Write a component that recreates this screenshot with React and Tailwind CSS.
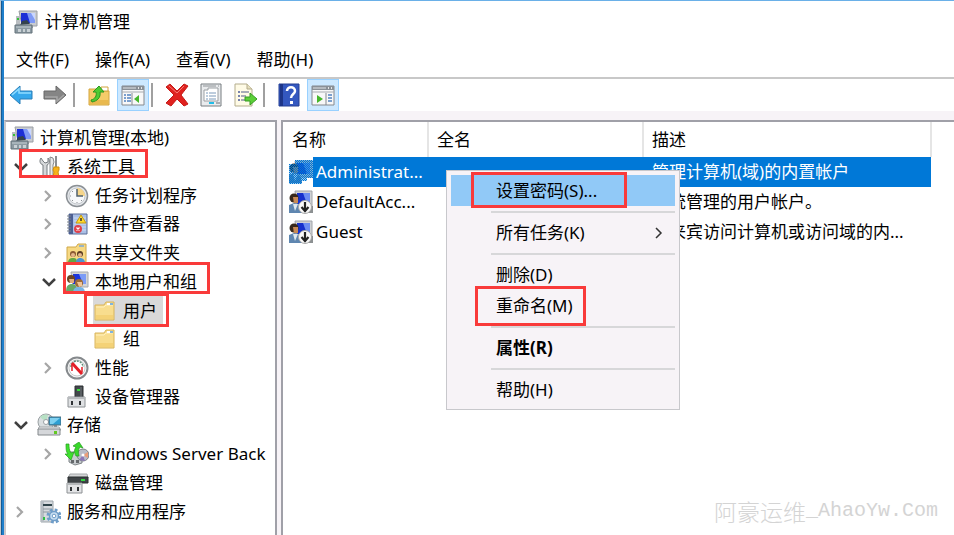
import { clsx } from 'clsx';

/* ---------- icons ---------- */

const Svg = ({ className = 'w-6 h-6', box = '0 0 24 24', children }) => (
  <svg viewBox={box} className={clsx('shrink-0', className)} fill="none" aria-hidden="true">
    {children}
  </svg>
);

const ComputerIcon = ({ className }) => (
  <Svg className={className}>
    <path d="M5 1h18v15H8z" fill="#c9ccd0" stroke="#9a9ea4" />
    <path d="M7 3h14v10H7z" fill="#1c2fd6" />
    <path d="M13 3h8v10h-5z" fill="#7f9af5" />
    <path d="M17 3h4v7z" fill="#c9d6ff" />
    <path d="M13 16h6v2h-6z" fill="#a5a9ad" />
    <path d="M2 6h4v9H2z" fill="#b9bdc1" />
    <path d="M3 8h2v2H3z" fill="#35c235" />
    <path d="M6 15l2-4 5-1 3 4z" fill="#33424c" />
    <path d="M1 15h17v8H1z" fill="#8c9aa2" stroke="#65737b" />
    <path d="M2 17h15" stroke="#c3cdd2" />
    <path d="M4 19h3v3H4zM9 19h2v3H9zM13 19h3v3h-3z" fill="#c9d1d5" />
  </Svg>
);

const ToolsIcon = () => (
  <Svg>
    <path d="M4 3c-2 3-1 6 2 7v12h4V10c3-1 3-5 1-7v4L8 8 6 6z" fill="#d5d7d9" stroke="#777c80" />
    <path d="M13 2l3 1 1 4-1 3v12h-3z" fill="#e5e7e8" stroke="#85898c" />
    <path d="M19 1v12" stroke="#8c8f92" strokeWidth="2" />
    <path d="M17 12h5v3l-1 2 1 5h-6l1-5-1-2z" fill="#f6b21b" stroke="#d18f0b" />
  </Svg>
);

const ClockIcon = () => (
  <Svg>
    <circle cx="12" cy="12" r="10.5" fill="#e3e6ea" stroke="#8b9095" strokeWidth="1.5" />
    <circle cx="12" cy="12" r="8" fill="#f7f8fa" stroke="#c4c8cc" />
    <path d="M12 4a8 8 0 0 1 8 8h-8z" fill="#f6d58a" />
    <path d="M12 5v7h6" stroke="#52616f" strokeWidth="1.5" />
    <path d="M5 12h1M12 18v1M7 7l1 1M7 17l1-1M17 17l-1-1" stroke="#8b9095" />
  </Svg>
);

const EventIcon = () => (
  <Svg>
    <path d="M4 2h18v20H4z" fill="#a9bfe6" stroke="#5c6f99" />
    <path d="M4 2h4v20H4z" fill="#4c5f92" />
    <path d="M9 6h12M9 9h12M9 12h12M9 15h12M9 18h12" stroke="#ccdaf2" />
    <path d="M2 4h4M2 7h4M2 10h4M2 13h4M2 16h4M2 19h4" stroke="#7d838b" />
    <path d="M16 3l5 8H11z" fill="#ffd92e" stroke="#c79a10" />
    <path d="M16 6v3" stroke="#333" strokeWidth="1.5" />
    <circle cx="13" cy="17" r="4" fill="#e0404a" />
    <path d="M11.500 15.500l3 3M14.500 15.500l-3 3" stroke="#fff" strokeWidth="1.200" />
  </Svg>
);

const SharedIcon = () => (
  <Svg>
    <path d="M2 6h9l2-3h8v18H2z" fill="#f7d983" stroke="#d0a848" />
    <path d="M14 5h5" stroke="#7aa7d8" strokeWidth="1.500" />
    <circle cx="8" cy="13" r="3" fill="#8a5a33" />
    <circle cx="15" cy="13" r="3" fill="#5a3d24" />
    <circle cx="8" cy="14" r="2" fill="#e5b78c" />
    <circle cx="15" cy="14" r="2" fill="#e5b78c" />
    <path d="M3 22c0-4 2-5 5-5s4 1 4 5z" fill="#62a844" />
    <path d="M11 22c0-4 2-5 4-5s5 1 5 5z" fill="#4d94ce" />
  </Svg>
);

const UsersIcon = () => (
  <Svg>
    <path d="M6 2h17v15H8z" fill="#d3d5d8" stroke="#a5a8ac" />
    <path d="M8 4h13v10H8z" fill="#1c35dc" />
    <path d="M14 4h7v10h-3z" fill="#7c9cf6" />
    <circle cx="6" cy="9" r="4" fill="#6b4423" />
    <path d="M4 9h5v4H5z" fill="#e0ab7c" />
    <path d="M1 22c0-6 2-8 6-8s5 3 5 8z" fill="#68a868" />
    <circle cx="14" cy="13" r="4" fill="#9c6b36" />
    <path d="M12 12h5v4l-3 1z" fill="#efc396" />
    <path d="M8 23c0-4 2-6 6-6s6 2 6 6z" fill="#78b4e4" />
  </Svg>
);

const FolderIcon = () => (
  <Svg>
    <path d="M2 6h9l2-3h8v18H2z" fill="#f8dd8e" stroke="#d8b45c" />
    <path d="M3 8h8l2-2h7" stroke="#fff0bd" />
    <path d="M14 4h6v2h-6z" fill="#fff" />
    <path d="M17 5h3" stroke="#539bd4" strokeWidth="1.500" />
    <path d="M3 16h17v4H3z" fill="#efc75f" opacity=".5" />
  </Svg>
);

const GaugeIcon = () => (
  <Svg>
    <circle cx="12" cy="12" r="10.500" fill="#f7f7f7" stroke="#85898c" strokeWidth="2" />
    <circle cx="12" cy="12" r="8" fill="#fff" stroke="#c7caca" />
    <path d="M6 11a6 6 0 0 1 12 0" stroke="#5e8d77" strokeWidth="1.500" strokeDasharray="2 1" />
    <path d="M7 7l10 11" stroke="#e31f26" strokeWidth="3" />
    <path d="M7 15V8M17 16v-5" stroke="#e31f26" strokeWidth="1.500" />
  </Svg>
);

const DeviceIcon = () => (
  <Svg>
    <path d="M10 1h8v13h-8z" fill="#42474b" stroke="#2d3033" />
    <path d="M12 4h3v2h-3z" fill="#37dc3c" />
    <path d="M16 2v11" stroke="#70767a" />
    <path d="M3 12h17v10H3z" fill="#dfe1e3" stroke="#8d9194" />
    <path d="M3 12h17v2H3z" fill="#b8bbbe" />
    <path d="M6 16h2v4H6zM14 16h2v4h-2z" fill="#303336" />
  </Svg>
);

const StorageIcon = () => (
  <Svg>
    <circle cx="9" cy="9" r="8" fill="#d9dee0" stroke="#9aa0a3" />
    <path d="M9 9L3 4c3-3 6-3 8-2z" fill="#b7e1c4" />
    <circle cx="9" cy="9" r="2.500" fill="#fff" stroke="#9aa0a3" />
    <path d="M12 4h12v8H12z" fill="#2e9fd3" stroke="#4c6c7c" />
    <path d="M13 5h10l-7 6h-3z" fill="#7fd0f0" />
    <path d="M17 12h3v3h-3z" fill="#7a8388" />
    <path d="M2 14h20l2 3H1z" fill="#eceeef" stroke="#a2a6a9" />
    <path d="M1 16h22v6H1z" fill="#d5d7da" stroke="#84898c" />
    <path d="M17 18h3v3h-3z" fill="#62c922" />
  </Svg>
);

const BackupIcon = () => (
  <Svg>
    <path d="M4 10h13v11l-7 2-6-3z" fill="#c8cccf" stroke="#7d8386" />
    <circle cx="18" cy="13" r="6" fill="#b9bcc7" stroke="#7c8088" />
    <path d="M18 13l5-3v6z" fill="#eb9d77" />
    <path d="M18 13l-4 5 6 1z" fill="#8c78b8" />
    <circle cx="18" cy="13" r="1.500" fill="#fff" />
    <path d="M1 2c0 5 0 8 2 10H0l6 6 3-8-3 1C4 8 4 5 4 2z" fill="#3fe12e" stroke="#279c20" strokeWidth=".7" />
    <path d="M11 14c-2-4-2-6 0-9l-3-1 6-4 4 6-3-1c-2 3-2 5-1 9z" fill="#38d82a" stroke="#279c20" strokeWidth=".7" />
    <path d="M6 18h3v3H6zM11 18h3v3h-3z" fill="#65696c" />
  </Svg>
);

const DiskIcon = () => (
  <Svg>
    <path d="M5 3h17l1 4H3z" fill="#d5d7d8" stroke="#a5a8aa" />
    <path d="M3 6h20v6H3z" fill="#3f4447" stroke="#2b2f31" />
    <path d="M16 8h4v2h-4z" fill="#32d741" />
    <path d="M2 12h15v10H2z" fill="#e3e4e6" stroke="#8d9194" />
    <path d="M2 12h15v2H2z" fill="#b5b8ba" />
    <path d="M5 16h2v4H5zM12 16h2v4h-2z" fill="#303336" />
  </Svg>
);

const ServicesIcon = () => (
  <Svg>
    <path d="M4 1h12v21H4z" fill="#d6dade" stroke="#9ba3a9" />
    <path d="M4 1h3v21H4z" fill="#b6bdc3" />
    <path d="M6 5h9" stroke="#30444b" strokeWidth="2" />
    <path d="M6 9h9M6 12h7" stroke="#8c979e" />
    <path d="M6 17h2v3H6z" fill="#2fbf44" />
    <circle cx="17" cy="16" r="6" stroke="#6f9dc8" strokeWidth="3" strokeDasharray="2.700 2" />
    <circle cx="17" cy="16" r="4.500" fill="#c8dff2" stroke="#6f9dc8" strokeWidth="1.500" />
    <circle cx="17" cy="16" r="1.800" fill="#fff" stroke="#6f9dc8" />
  </Svg>
);

const AccountIcon = ({ disabled, selected }) => (
  <Svg>
    <path d="M6 1h17v16H8z" fill="#cfd1d4" stroke="#a1a4a8" />
    <path d="M8 3h13v11H8z" fill="#1530cc" />
    <path d="M14 3h7v11h-3z" fill="#6b8df2" />
    <circle cx="5" cy="8" r="4.500" fill="#38281c" />
    <path d="M4 7h5v6l-4 1z" fill="#c78a56" />
    <path d="M0 23V15l5-2c5 0 7 3 8 10z" fill="#5f86b0" />
    <path d="M4 14l2 7 3-7z" fill="#dfe8ef" />
    {disabled && (
      <>
        <path d="M13 16h11v7H13z" fill="#8c9092" />
        <circle cx="16" cy="17" r="6.500" fill="#fafafa" stroke="#a8a8a8" />
        <path d="M16 12v8M12.500 17l3.500 4 3.500-4" stroke="#222" strokeWidth="2.200" />
      </>
    )}
    {selected && (
      <>
        <pattern id="dither" width="2" height="2" patternUnits="userSpaceOnUse">
          <path d="M0 0h1v1H0zM1 1h1v1H1z" fill="#0078d7" />
        </pattern>
        <path d="M6 0h18v18h-6v3h-5v3H0V4h6z" fill="#0078d7" opacity=".35" />
        <path d="M6 0h18v18h-6v3h-5v3H0V4h6z" fill="url(#dither)" />
      </>
    )}
  </Svg>
);

const ArrowIcon = ({ forward }) => (
  <Svg className={clsx('w-6 h-6', forward && 'rotate-180')}>
    <path
      d="M1 12L11 3v5h12v8H11v5z"
      fill={forward ? '#858585' : '#35a8ec'}
      stroke={forward ? '#696969' : '#2a7fb8'}
      strokeLinejoin="round"
    />
    <path d="M3 12l7-6v4h12" stroke={forward ? '#a7a7a7' : '#8fdcff'} strokeWidth="1.500" />
  </Svg>
);

const UpIcon = () => (
  <Svg>
    <path d="M2 6h8l2 2h10v14H2z" fill="#f4cc69" stroke="#d4a53f" />
    <path d="M14 4h7v4h-7z" fill="#fff" stroke="#d4a53f" />
    <path d="M3 17h18v4H3z" fill="#e9b94e" />
    <path d="M4 17c4-1 6-4 5-8H6l6-6 5 6h-4c1 6-3 9-8 10z" fill="#4fcb33" stroke="#2d9620" />
  </Svg>
);

const PaneIcon = ({ right }) => (
  <Svg>
    <path d="M1 3h22v19H1z" fill="#f8f8f8" stroke="#85898e" />
    <path d="M1 3h22v4H1z" fill="#8a9097" />
    <path d="M2 5h13" stroke="#dfe3e7" />
    <path d="M17 5h1M20 5h1" stroke="#fff" strokeWidth="1.500" />
    <path d="M1 9h22" stroke="#a6abb0" />
    {right ? (
      <>
        <path d="M15 10v12" stroke="#85898e" />
        <path d="M17 12h4M17 15h4M17 18h4" stroke="#5182c0" strokeWidth="1.500" />
        <path d="M6 12l6 4-6 4z" fill="#46b72b" />
      </>
    ) : (
      <>
        <path d="M11 10v12" stroke="#85898e" />
        <path d="M3 12h2M6 12h4M3 15h2M6 15h4M3 18h2M6 18h4" stroke="#5182c0" strokeWidth="1.500" />
        <path d="M18 12l-5 4 5 4z" fill="#46b72b" />
      </>
    )}
  </Svg>
);

const DeleteIcon = () => (
  <Svg>
    <path
      d="M1 4l4-3 7 7 7-7 4 2-7 9 7 9-4 2-7-7-6 7-5-3 8-8z"
      fill="#e0221f"
      stroke="#c41a17"
      strokeLinejoin="round"
    />
    <path d="M4 5l8 7 8-9M6 20l6-7 7 8" stroke="#e0221f" strokeWidth="3" />
    <path d="M4 3l8 7 7-7" stroke="#f47c75" />
  </Svg>
);

const PropertiesIcon = () => (
  <Svg>
    <path d="M2 1h20v22H2z" fill="#e9ebed" stroke="#777c80" />
    <path d="M4 3h13M19 3h1" stroke="#8d9296" />
    <path d="M5 7h4V5h10v13H5z" fill="#fff" stroke="#9a9fa3" />
    <path d="M7 10h2M10 10h7M7 13h2M10 13h7M7 16h2M10 16h7" stroke="#7b99ba" />
    <path d="M10 20h5" stroke="#20bde8" strokeWidth="2" />
    <path d="M17 20h4" stroke="#aaaeb2" strokeWidth="2" />
  </Svg>
);

const ExportIcon = () => (
  <Svg>
    <path d="M2 1h12l5 5v17H2z" fill="#fffbe6" stroke="#b4ad8d" />
    <path d="M14 1v5h5" fill="#e6dfbe" stroke="#b4ad8d" />
    <path d="M5 9h2M5 13h2M5 17h2" stroke="#4b5c9c" strokeWidth="1.500" />
    <path d="M8 9h8M8 13h5M8 17h4" stroke="#8b93a8" strokeWidth="1.500" />
    <path d="M12 14h5v-4l7 6-7 6v-4h-5z" fill="#5bcf37" stroke="#369c22" />
  </Svg>
);

const HelpIcon = () => (
  <Svg>
    <path d="M2 1h20v22H2z" fill="#3458c0" stroke="#243f93" />
    <path d="M3 1h3v22H3z" fill="#1d3588" />
    <path d="M10 8c0-5 8-5 8 0 0 3-4 3-4 7" stroke="#fff" strokeWidth="2.500" />
    <path d="M13 18h3v3h-3z" fill="#fff" />
  </Svg>
);

const Chevron = ({ open }) => (
  <Svg className="w-4 h-4" box="0 0 16 16">
    {open ? (
      <path d="M2 5l6 6 6-6" stroke="#404040" strokeWidth="2.500" />
    ) : (
      <path d="M4 3l5 5-5 5" stroke="#a6a6a6" strokeWidth="2.200" />
    )}
  </Svg>
);

/* ---------- data ---------- */

const menus = ['文件(F)', '操作(A)', '查看(V)', '帮助(H)'];

const tools = [
  { label: '后退', icon: <ArrowIcon /> },
  { label: '前进', icon: <ArrowIcon forward /> },
  null,
  { label: '向上', icon: <UpIcon /> },
  { label: '显示/隐藏控制台树', icon: <PaneIcon />, active: true },
  null,
  { label: '删除', icon: <DeleteIcon /> },
  { label: '属性', icon: <PropertiesIcon /> },
  { label: '导出列表', icon: <ExportIcon /> },
  null,
  { label: '帮助', icon: <HelpIcon /> },
  { label: '显示/隐藏操作窗格', icon: <PaneIcon right />, active: true },
];

const indent = ['pl-1', 'pl-1', 'pl-8', 'pl-[60px]'];

const tree = [
  { level: 0, label: '计算机管理(本地)', icon: <ComputerIcon /> },
  { level: 1, label: '系统工具', icon: <ToolsIcon />, open: true },
  { level: 2, label: '任务计划程序', icon: <ClockIcon />, open: false },
  { level: 2, label: '事件查看器', icon: <EventIcon />, open: false },
  { level: 2, label: '共享文件夹', icon: <SharedIcon />, open: false },
  { level: 2, label: '本地用户和组', icon: <UsersIcon />, open: true },
  { level: 3, label: '用户', icon: <FolderIcon />, selected: true },
  { level: 3, label: '组', icon: <FolderIcon /> },
  { level: 2, label: '性能', icon: <GaugeIcon />, open: false },
  { level: 2, label: '设备管理器', icon: <DeviceIcon /> },
  { level: 1, label: '存储', icon: <StorageIcon />, open: true },
  { level: 2, label: 'Windows Server Back', icon: <BackupIcon />, open: false },
  { level: 2, label: '磁盘管理', icon: <DiskIcon /> },
  { level: 1, label: '服务和应用程序', icon: <ServicesIcon />, open: false },
];

const accounts = [
  { name: 'Administrat...', desc: '管理计算机(域)的内置帐户', selected: true },
  { name: 'DefaultAcc...', desc: '系统管理的用户帐户。', disabled: true },
  { name: 'Guest', desc: '供来宾访问计算机或访问域的内...', disabled: true },
];

const contextItems = [
  { label: '设置密码(S)...', active: true },
  null,
  { label: '所有任务(K)', submenu: true },
  null,
  { label: '删除(D)' },
  { label: '重命名(M)' },
  null,
  { label: '属性(R)', bold: true },
  null,
  { label: '帮助(H)' },
];

// red callouts drawn over the window
const callouts = [
  'left-[19px] top-[149px] w-[129px] h-[29px]',
  'left-[63px] top-[262px] w-[147px] h-[32px]',
  'left-[84px] top-[293px] w-[85px] h-[34px]',
  'left-[471px] top-[172px] w-[156px] h-[36px]',
  'left-[475px] top-[286px] w-[111px] h-[40px]',
];

/* ---------- parts ---------- */

const Toolbar = () => (
  <div role="toolbar" className="flex gap-0.5 pl-px bg-white border-t-2 border-[#c8c8c8] h-[34px] shrink-0">
    {tools.map((tool, i) =>
      tool ? (
        <button
          key={i}
          type="button"
          aria-label={tool.label}
          className={clsx(
            'w-8 flex items-center justify-center border',
            tool.active ? 'bg-[#cce8ff] border-[#99d1ff]' : 'border-transparent'
          )}
        >
          {tool.icon}
        </button>
      ) : (
        <span key={i} className="w-2 flex py-1">
          <span className="w-0.5 bg-[#a0a0a0]" />
        </span>
      )
    )}
  </div>
);

const TreeRow = ({ node }) => (
  <li className={clsx('flex items-center gap-[5px] whitespace-nowrap min-h-0', indent[node.level])}>
    {node.level > 0 && (
      <span className="flex justify-center shrink-0 w-[22px]">
        {node.open !== undefined && <Chevron open={node.open} />}
      </span>
    )}
    <button
      type="button"
      className={clsx('flex items-center gap-1.5 h-full', node.selected && 'bg-[#d9d9d9] pr-1.5')}
    >
      {node.icon}
      <span>{node.label}</span>
    </button>
  </li>
);

const AccountTable = () => (
  <table className="table-fixed w-[649px] border-collapse text-left">
    <thead>
      <tr className="h-[35px]">
        <th className="w-[145px] pl-[9px] font-normal border-r-2 border-[#e5e5e5]">名称</th>
        <th className="w-[215px] pl-2 font-normal border-r-2 border-[#e5e5e5]">全名</th>
        <th className="pl-2 font-normal border-r-2 border-[#e5e5e5]">描述</th>
      </tr>
    </thead>
    <tbody>
      {accounts.map((a) => (
        <tr key={a.name} className={clsx('h-[30px] whitespace-nowrap', a.selected && 'text-white')}>
          <td className="p-0">
            <div className="flex items-center h-[30px] pl-[6px]">
              <AccountIcon disabled={a.disabled} selected={a.selected} />
              <span className={clsx('flex-1 h-full flex items-center pl-[3px]', a.selected && 'bg-[#0078d7]')}>
                {a.name}
              </span>
            </div>
          </td>
          <td className={clsx(a.selected && 'bg-[#0078d7]')} />
          <td className={clsx('pl-[9px]', a.selected && 'bg-[#0078d7]')}>{a.desc}</td>
        </tr>
      ))}
    </tbody>
  </table>
);

const ContextMenu = () => (
  <div
    role="menu"
    className="absolute left-[446px] top-[170px] w-[234px] p-1 bg-[#f7f3f7] border border-[#c8c8cc]"
  >
    {contextItems.map((item, i) =>
      item ? (
        <button
          key={i}
          type="button"
          role="menuitem"
          className={clsx(
            'flex items-center justify-between w-full h-[31px] pl-[45px] pr-2.5',
            item.active && 'bg-[#91c9f7]',
            item.bold && 'font-bold'
          )}
        >
          {item.label}
          {item.submenu && (
            <Svg className="w-3 h-3" box="0 0 12 12">
              <path d="M3 1l5 5-5 5" stroke="#333" strokeWidth="1.500" />
            </Svg>
          )}
        </button>
      ) : (
        <div key={i} role="separator" className="h-[11px] pl-10 flex items-center">
          <div className="h-0.5 w-full bg-[#d7d7d9]" />
        </div>
      )
    )}
  </div>
);

export default function App() {
  return (
    <div className="relative flex flex-col min-h-screen overflow-hidden bg-[#f7f3f7] border-l border-t border-l-[#c3c8cd] border-t-[#6ab0e8] pl-[3px] shadow-[inset_1px_0_#145a94,inset_3px_0_#1f7fcb] text-black text-[17px] leading-6 font-['Noto_Sans','Noto_Sans_CJK_SC',sans-serif]">
      <header className="flex items-center gap-[7px] h-[42px] pl-[10px] bg-white">
        <ComputerIcon />
        <h1>计算机管理</h1>
      </header>
      <nav className="flex items-center gap-[26px] h-[34px] pl-3 bg-white">
        {menus.map((m) => (
          <button key={m} type="button">{m}</button>
        ))}
      </nav>
      <Toolbar />

      <main className="flex flex-1 gap-1 pt-[9px]">
        <aside className="w-[273px] shrink-0 overflow-hidden bg-white border-2 border-b-0 border-l-[#c8c8cc] border-[#a0a0a8]">
          <ul className="grid auto-rows-fr h-[402px] mt-0.5">
            {tree.map((node) => (
              <TreeRow key={node.label} node={node} />
            ))}
          </ul>
        </aside>
        <section className="flex-1 min-w-0 bg-white border-l-2 border-t-2 border-[#a0a0a8]">
          <AccountTable />
        </section>
      </main>

      <div className="absolute right-4 bottom-3 flex items-center text-[#d4d4d4] font-light">
        <span className="text-[23px] font-['Noto_Sans_CJK_SC',sans-serif]">阿豪运维</span>
        <span className="text-[20px] font-['Liberation_Mono',monospace]">_AhaoYw.Com</span>
      </div>

      <div className="absolute inset-y-0 -left-px -top-px">
        <ContextMenu />
        {callouts.map((place) => (
          <span key={place} className={clsx('absolute border-[3px] border-[#f93a3a] pointer-events-none', place)} />
        ))}
      </div>
    </div>
  );
}
